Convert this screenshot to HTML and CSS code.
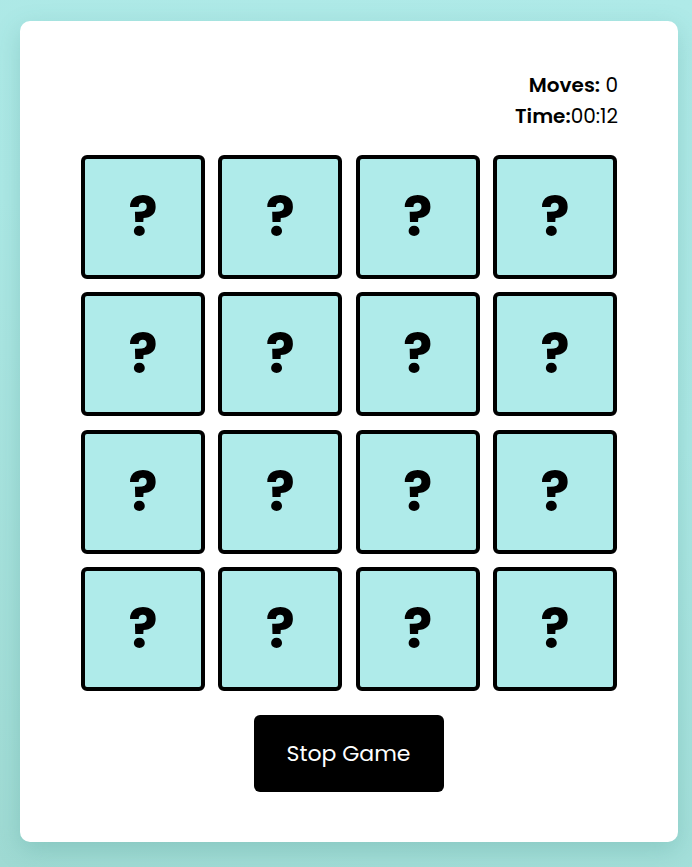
FILE: index.html
```html
<!DOCTYPE html>
<html>
<head>
<meta charset="utf-8">
<link rel="stylesheet" href="styles.css">
</head>
<body>
<div class="wrapper">
  <div class="stats">
    <div class="stat"><span class="label">Moves:</span> 0</div>
    <div class="stat"><span class="label">Time:</span>00:12</div>
  </div>
  <div class="grid">
    <div class="tile">?</div><div class="tile">?</div><div class="tile">?</div><div class="tile">?</div>
    <div class="tile">?</div><div class="tile">?</div><div class="tile">?</div><div class="tile">?</div>
    <div class="tile">?</div><div class="tile">?</div><div class="tile">?</div><div class="tile">?</div>
    <div class="tile">?</div><div class="tile">?</div><div class="tile">?</div><div class="tile">?</div>
  </div>
  <div class="controls">
    <button class="btn">Stop Game</button>
  </div>
</div>
</body>
</html>
```
FILE: styles.css
```css
* { box-sizing: border-box; }
html, body { height: 100%; }
body {
  margin: 0;
  padding: 21px 14px 25px 20px;
  background: linear-gradient(20deg, #9fdad3 0%, #ace8e5 60%, #afeae8 100%);
  font-family: "Poppins", "Open Sans", sans-serif;
  color: #000;
}
.wrapper {
  width: 658px;
  height: 821px;
  background: #fff;
  border-radius: 10px;
  box-shadow: 0 8px 24px rgba(60, 140, 130, 0.25);
  padding: 49px 60px 50px 61px;
  display: flex;
  flex-direction: column;
}
.stats {
  display: flex;
  flex-direction: column;
  align-items: flex-end;
  font-size: 20px;
  line-height: 31px;
}
.label { font-weight: 600; }
.grid {
  margin-top: 23px;
  display: grid;
  grid-template-columns: repeat(4, 124px);
  grid-auto-rows: 124px;
  gap: 13.33px;
}
.tile {
  background: #afebea;
  border: 4px solid #000;
  border-radius: 6px;
  display: flex;
  align-items: center;
  justify-content: center;
  font-size: 54px;
  font-weight: 700;
  line-height: 1;
}
.controls {
  margin-top: 24px;
  display: flex;
  justify-content: center;
}
.btn {
  width: 190px;
  height: 77px;
  margin-left: -2px;
  background: #000;
  color: #fff;
  border: none;
  border-radius: 6px;
  font-family: inherit;
  font-size: 22px;
}
```
